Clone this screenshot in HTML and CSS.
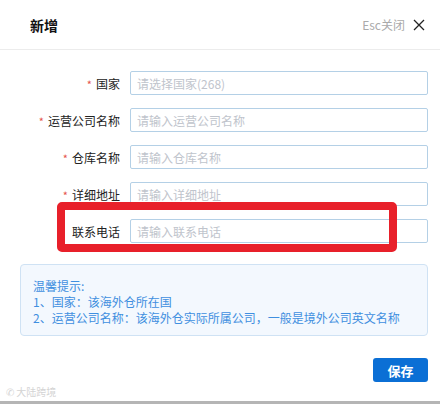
FILE: index.html
```html
<!DOCTYPE html>
<html lang="zh-CN">
	<head>
		<meta charset="UTF-8" />
		<meta name="viewport" content="width=device-width, initial-scale=1.0" />
		<title>新增海外仓</title>
		<link rel="stylesheet" href="styles.css">
	</head>
	<body>
		<div class="dialog">
			<div class="header">
				<h2>新增</h2>
				<span class="close">
					Esc关闭
					<svg width="12" height="12" viewBox="0 0 12 12">
						<path d="M1 1L11 11M11 1L1 11" stroke="#222" stroke-width="1.3" fill="none" />
					</svg>
				</span>
			</div>

			<div class="form">
				<div class="row">
					<label><i>*</i>国家</label>
					<input type="text" placeholder="请选择国家(268)" />
				</div>
				<div class="row">
					<label><i>*</i>运营公司名称</label>
					<input type="text" placeholder="请输入运营公司名称" />
				</div>
				<div class="row">
					<label><i>*</i>仓库名称</label>
					<input type="text" placeholder="请输入仓库名称" />
				</div>
				<div class="row">
					<label><i>*</i>详细地址</label>
					<input type="text" placeholder="请输入详细地址" />
				</div>
				<div class="row mark">
					<label>联系电话</label>
					<input type="text" placeholder="请输入联系电话" />
					<span class="mark-box"></span>
				</div>
			</div>

			<div class="tips">
				<p>温馨提示:</p>
				<p>1、国家：该海外仓所在国</p>
				<p>2、运营公司名称：该海外仓实际所属公司，一般是境外公司英文名称</p>
			</div>

			<div class="footer">
				<button class="save-btn">保存</button>
			</div>

			<div class="watermark">✆ 大陆跨境</div>
		</div>
		<div class="bottom-bar"></div>
	</body>
</html>
```

FILE: styles.css
```css
body {
	margin: 0;
	width: 440px;
	height: 404px;
	overflow: hidden;
	font-family: "Microsoft YaHei", "Noto Sans CJK SC", sans-serif;
	background: #fff;
	color: #222;
}

.dialog {
	height: 401px;
	position: relative;
}

.header {
	height: 49px;
	display: flex;
	align-items: center;
	justify-content: space-between;
	padding: 0 15px 0 30px;
	border-bottom: 1px solid #ececec;
}

.header h2 {
	margin: 0;
	font-size: 14px;
	font-weight: bold;
	color: #111;
}

.close {
	display: flex;
	align-items: center;
	gap: 8px;
	font-size: 12px;
	color: #aaa;
}

.form {
	padding-top: 21px;
	display: flex;
	flex-direction: column;
	gap: 13px;
}

.row {
	display: flex;
	align-items: center;
	position: relative;
}

.row label {
	width: 120px;
	text-align: right;
	font-size: 12px;
	color: #222;
	margin-right: 10px;
}

.row label i {
	font-style: normal;
	color: #e5534b;
	margin-right: 4px;
	font-size: 11px;
}

.row input {
	box-sizing: border-box;
	width: 298px;
	height: 24px;
	padding: 0 6px;
	border: 1px solid #b4d0e6;
	border-radius: 2px;
	font-family: inherit;
	font-size: 12px;
	outline: none;
}

.row input::placeholder {
	color: #c0c4cc;
}

/* 联系电话 标注框 */
.mark-box {
	position: absolute;
	left: 57px;
	top: -17px;
	width: 340px;
	height: 50px;
	box-sizing: border-box;
	border: 8px solid #e8202a;
	border-radius: 5px;
}

.tips {
	margin: 21px 12px 0 20px;
	height: 72px;
	box-sizing: border-box;
	padding: 13px 12px 0 12px;
	background: #f3f8fe;
	border: 1px solid #cfe2f4;
	border-radius: 4px;
	font-size: 12px;
	line-height: 16px;
	color: #3f8fe0;
}

.tips p {
	margin: 0;
}

.footer {
	display: flex;
	justify-content: flex-end;
	padding: 22px 12px 0 0;
}

.save-btn {
	width: 55px;
	height: 24px;
	border: none;
	border-radius: 3px;
	background: #0b6fd5;
	color: #fff;
	font-family: inherit;
	font-size: 13px;
	font-weight: bold;
	cursor: pointer;
}

.watermark {
	position: absolute;
	left: 6px;
	bottom: 2px;
	font-size: 10px;
	color: #d4d4d4;
}

.bottom-bar {
	height: 3px;
	background: #b5b5b5;
}
```
